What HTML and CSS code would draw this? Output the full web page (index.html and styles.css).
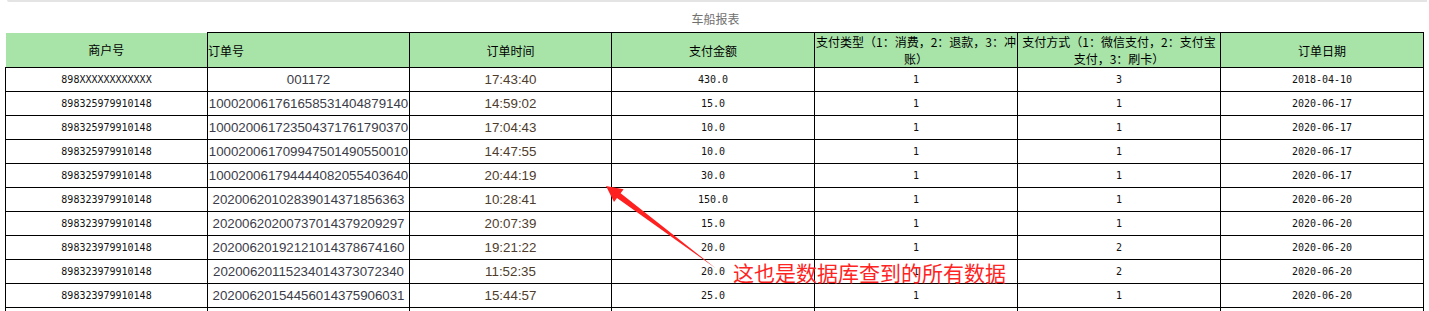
FILE: index.html
```html
<!DOCTYPE html>
<html lang="zh-CN">
<head>
<meta charset="utf-8">
<title>车船报表</title>
<link rel="stylesheet" href="styles.css">
</head>
<body>
<div class="page">
  <div class="topline"></div>
  <div class="title">车船报表</div>
  <table class="report">
    <colgroup>
      <col class="c1"><col class="c2"><col class="c3"><col class="c4"><col class="c5"><col class="c6"><col class="c7">
    </colgroup>
    <thead>
      <tr>
        <th class="first">商户号</th>
        <th class="left">订单号</th>
        <th>订单时间</th>
        <th>支付金额</th>
        <th class="wrap">支付类型（1：消费，2：退款，3：冲<br>账）</th>
        <th class="wrap">支付方式（1：微信支付，2：支付宝<br>支付，3：刷卡）</th>
        <th>订单日期</th>
      </tr>
    </thead>
    <tbody>
      <tr><td class="mono">898XXXXXXXXXXXX</td><td class="order">001172</td><td class="time">17:43:40</td><td class="mono">430.0</td><td class="mono">1</td><td class="mono">3</td><td class="mono">2018-04-10</td></tr>
      <tr><td class="mono">898325979910148</td><td class="order">100020061761658531404879140</td><td class="time">14:59:02</td><td class="mono">15.0</td><td class="mono">1</td><td class="mono">1</td><td class="mono">2020-06-17</td></tr>
      <tr><td class="mono">898325979910148</td><td class="order">100020061723504371761790370</td><td class="time">17:04:43</td><td class="mono">10.0</td><td class="mono">1</td><td class="mono">1</td><td class="mono">2020-06-17</td></tr>
      <tr><td class="mono">898325979910148</td><td class="order">100020061709947501490550010</td><td class="time">14:47:55</td><td class="mono">10.0</td><td class="mono">1</td><td class="mono">1</td><td class="mono">2020-06-17</td></tr>
      <tr><td class="mono">898325979910148</td><td class="order">100020061794444082055403640</td><td class="time">20:44:19</td><td class="mono">30.0</td><td class="mono">1</td><td class="mono">1</td><td class="mono">2020-06-17</td></tr>
      <tr><td class="mono">898323979910148</td><td class="order">20200620102839014371856363</td><td class="time">10:28:41</td><td class="mono">150.0</td><td class="mono">1</td><td class="mono">1</td><td class="mono">2020-06-20</td></tr>
      <tr><td class="mono">898323979910148</td><td class="order">20200620200737014379209297</td><td class="time">20:07:39</td><td class="mono">15.0</td><td class="mono">1</td><td class="mono">1</td><td class="mono">2020-06-20</td></tr>
      <tr><td class="mono">898323979910148</td><td class="order">20200620192121014378674160</td><td class="time">19:21:22</td><td class="mono">20.0</td><td class="mono">1</td><td class="mono">2</td><td class="mono">2020-06-20</td></tr>
      <tr><td class="mono">898323979910148</td><td class="order">20200620115234014373072340</td><td class="time">11:52:35</td><td class="mono">20.0</td><td class="mono">1</td><td class="mono">2</td><td class="mono">2020-06-20</td></tr>
      <tr><td class="mono">898323979910148</td><td class="order">20200620154456014375906031</td><td class="time">15:44:57</td><td class="mono">25.0</td><td class="mono">1</td><td class="mono">1</td><td class="mono">2020-06-20</td></tr>
      <tr><td></td><td></td><td></td><td></td><td></td><td></td><td></td></tr>
    </tbody>
  </table>

  <svg class="arrow" width="120" height="92" viewBox="0 0 120 92" aria-hidden="true">
    <polygon points="6,6 23.6,9.2 20.6,13.2 116,88.5 17,18 14,22" fill="#ff2020"/>
  </svg>
  <div class="note">这也是数据库查到的所有数据</div>
</div>
</body>
</html>
```

FILE: styles.css
```css
html, body {
  margin: 0;
  padding: 0;
  background: #ffffff;
}

body {
  font-family: "Noto Sans CJK SC", "Noto Sans", sans-serif;
  color: #000;
  overflow: hidden;
}

.page {
  position: relative;
  width: 1429px;
  height: 311px;
  overflow: hidden;
}

.topline {
  margin-left: 7px;
  margin-right: 2px;
  height: 0;
  border-bottom: 2px solid #e4e4e4;
  border-left: 1px solid #e4e4e4;
  border-bottom-left-radius: 3px;
}

.title {
  box-sizing: border-box;
  height: 30px;
  padding-top: 8px;
  font-size: 12px;
  line-height: 18px;
  text-align: center;
  color: #707070;
  padding-left: 2px;
}

.report {
  margin-left: 5px;
  width: 1419px;
  table-layout: fixed;
  border-collapse: collapse;
}

.c1 { width: 202px; }
.c2 { width: 202px; }
.c3 { width: 202px; }
.c4 { width: 203px; }
.c5 { width: 203px; }
.c6 { width: 203px; }
.c7 { width: 203px; }

.report th {
  background: #a8e4a8;
  border: 1px solid #000;
  font-weight: normal;
  font-size: 12px;
  line-height: 17px;
  height: 34px;
  padding: 0;
  text-align: center;
  white-space: nowrap;
  overflow: visible;
}

.report th.first {
  border-top: none;
  border-left: none;
}

.report th.left {
  text-align: left;
}

.report th.wrap {
  line-height: 17px;
}

.report td {
  border: 1px solid #000;
  height: 23px;
  padding: 0;
  text-align: center;
  white-space: nowrap;
  overflow: visible;
}

.report td.mono {
  font-family: "DejaVu Sans Mono", monospace;
  font-size: 10px;
  color: #111;
}

.report td.order {
  font-family: "Liberation Sans", Arial, sans-serif;
  font-size: 13.33px;
  color: #3c3c48;
  letter-spacing: -0.03px;
}

.report td.time {
  font-family: "Liberation Sans", Arial, sans-serif;
  font-size: 13.33px;
  color: #4e3c2c;
}

.arrow {
  position: absolute;
  left: 600px;
  top: 180px;
}

.note {
  position: absolute;
  left: 733px;
  top: 261px;
  font-size: 21px;
  line-height: 23px;
  color: #ff2424;
  white-space: nowrap;
}
```
